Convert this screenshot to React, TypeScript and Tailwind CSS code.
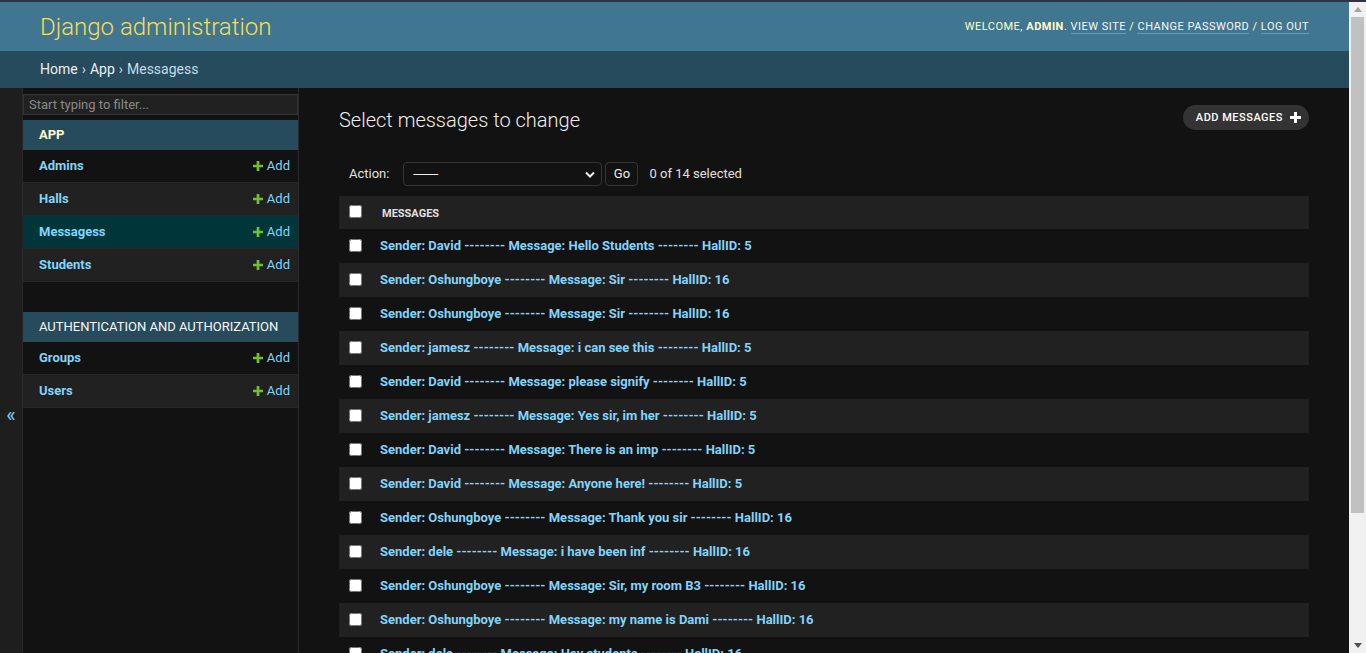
import React from "react";

const rows = [
  ["David", "Hello Students", "5"],
  ["Oshungboye", "Sir", "16"],
  ["Oshungboye", "Sir", "16"],
  ["jamesz", "i can see this", "5"],
  ["David", "please signify", "5"],
  ["jamesz", "Yes sir, im her", "5"],
  ["David", "There is an imp", "5"],
  ["David", "Anyone here!", "5"],
  ["Oshungboye", "Thank you sir", "16"],
  ["dele", "i have been inf", "16"],
  ["Oshungboye", "Sir, my room B3", "16"],
  ["Oshungboye", "my name is Dami", "16"],
  ["dele", "Hey students", "16"],
  ["David", "Good morning", "5"],
];

function Plus({ color, size = 11 }: { color: string; size?: number }) {
  return (
    <svg width={size} height={size} viewBox="0 0 11 11" className="shrink-0">
      <path d="M4 0h3v4h4v3H7v4H4V7H0V4h4z" fill={color} />
    </svg>
  );
}

function NavRow({ name, idx, current }: { name: string; idx: number; current?: boolean }) {
  const bg = current ? "bg-[#00363a]" : idx % 2 === 1 ? "bg-[#212121]" : "bg-[#121212]";
  return (
    <div className={`h-[33px] flex items-center justify-between pl-4 pr-2 border-b border-[#272727] ${bg}`}>
      <span className="text-[13px] font-bold text-[#81d4fa]">{name}</span>
      <span className="flex items-center gap-[4px] text-[13px] text-[#81d4fa]">
        <Plus color="#70bf2b" size={10} />
        Add
      </span>
    </div>
  );
}

export default function App() {
  return (
    <div className="w-[1366px] h-[653px] overflow-hidden flex flex-col bg-[#121212] font-[Roboto,'Noto_Sans',sans-serif] text-[#eeeeee]">
      <div className="h-[2px] shrink-0 bg-[#2e3442]" />
      <div className="flex flex-1 min-h-0">
        <div className="w-[1349px] flex flex-col overflow-hidden">
          {/* Header */}
          <div className="h-[49px] shrink-0 bg-[#417690] px-10 flex items-center justify-between">
            <div className="text-[24px] font-light text-[#f5dd5d] leading-none">Django administration</div>
            <div className="text-[11px] tracking-[0.5px] uppercase text-[#ffffcc] mt-[1px]">
              Welcome, <strong className="font-bold">admin</strong>.{" "}
              <span className="text-[#f7f7f7] border-b border-white/25">View site</span> /{" "}
              <span className="text-[#f7f7f7] border-b border-white/25">Change password</span> /{" "}
              <span className="text-[#f7f7f7] border-b border-white/25">Log out</span>
            </div>
          </div>
          {/* Breadcrumbs */}
          <div className="h-[37px] shrink-0 bg-[#264b5d] px-10 flex items-center text-[14px] text-[#c4dce8]">
            <span className="text-[#eeeeee]">Home</span>
            <span className="mx-[4px]">›</span>
            <span className="text-[#eeeeee]">App</span>
            <span className="mx-[4px]">›</span>
            <span>Messagess</span>
          </div>
          {/* Main */}
          <div className="flex flex-1 min-h-0">
            <div className="w-[23px] shrink-0 bg-[#1e1e1e] border-r border-[#272727] flex justify-center pt-[317px]">
              <span className="text-[20px] leading-none text-[#81d4fa]">«</span>
            </div>
            <div className="w-[276px] shrink-0 border-r border-[#2a2a2a] bg-[#121212]">
              <div className="mt-[6px] h-[21px] border border-[#353535] bg-[#212121] flex items-center px-[5px] text-[13px] text-[#8a8a8a]">
                Start typing to filter...
              </div>
              <div className="mt-[5px]">
                <div className="h-[30px] bg-[#264b5d] flex items-center pl-4 text-[13px] font-bold text-[#ffffcc] uppercase">App</div>
                <NavRow name="Admins" idx={0} />
                <NavRow name="Halls" idx={1} />
                <NavRow name="Messagess" idx={2} current />
                <NavRow name="Students" idx={3} />
              </div>
              <div className="mt-[30px]">
                <div className="h-[30px] bg-[#264b5d] flex items-center pl-4 text-[13px] text-[#f7f7f7] uppercase">
                  Authentication and Authorization
                </div>
                <NavRow name="Groups" idx={0} />
                <NavRow name="Users" idx={1} />
              </div>
            </div>
            <div className="flex-1 min-w-0 px-10 pt-5">
              <div className="flex items-start justify-between h-6">
                <h1 className="text-[20px] font-light leading-6 text-[#eeeeee]">Select messages to change</h1>
                <div className="-mt-[3px] h-[25px] rounded-[15px] bg-[#333333] flex items-center pl-[13px] pr-[8px] gap-[7px]">
                  <span className="text-[11px] font-medium tracking-[0.5px] uppercase text-white mt-[1px]">Add messages</span>
                  <Plus color="#ffffff" size={11} />
                </div>
              </div>
              <div className="mt-5 h-[44px] px-[10px] flex items-center text-[13px]">
                <span className="text-[#e0e0e0]">Action:</span>
                <div className="ml-[14px] w-[199px] h-6 border border-[#353535] rounded-[4px] bg-[#121212] flex items-center justify-between pl-[8px] pr-[6px]">
                  <span className="text-[13px] text-[#eeeeee] leading-none tracking-[-2px]">———</span>
                  <svg width="10" height="7" viewBox="0 0 10 7">
                    <path d="M1 1.5l4 4 4-4" stroke="#eeeeee" strokeWidth="2" fill="none" />
                  </svg>
                </div>
                <div className="ml-[3px] w-[33px] h-6 border border-[#353535] rounded-[4px] bg-[#121212] flex items-center justify-center text-[13px] text-[#eeeeee]">
                  Go
                </div>
                <span className="ml-[11px] text-[#e0e0e0]">0 of 14 selected</span>
              </div>
              <div className="w-full">
                <div className="h-[33px] bg-[#212121] flex items-center">
                  <div className="w-[33px] shrink-0 pl-[10px] flex items-center -mt-[2px]">
                    <input type="checkbox" className="w-[13px] h-[13px] m-0" readOnly />
                  </div>
                  <span className="pl-[10px] pt-[3px] text-[11px] font-bold uppercase text-[#e0e0e0]">Messages</span>
                </div>
                {rows.map((r, i) => (
                  <div key={i} className={`h-[34px] flex items-center ${i % 2 === 1 ? "bg-[#212121]" : "bg-[#121212]"}`}>
                    <div className="w-[33px] shrink-0 pl-[10px] flex items-center -mt-[2px]">
                      <input type="checkbox" className="w-[13px] h-[13px] m-0" readOnly />
                    </div>
                    <span className="pl-[8px] text-[13px] font-bold text-[#81d4fa] whitespace-nowrap">
                      Sender: {r[0]} -------- Message: {r[1]} -------- HallID: {r[2]}
                    </span>
                  </div>
                ))}
              </div>
            </div>
          </div>
        </div>
        {/* Scrollbar */}
        <div className="w-[17px] shrink-0 bg-[#f1f1f1] flex flex-col">
          <div className="h-[15px] flex items-center justify-center">
            <svg width="8" height="5" viewBox="0 0 8 5"><path d="M4 0l4 5H0z" fill="#a3a3a3" /></svg>
          </div>
          <div className="mx-[2px] h-[496px] bg-[#c1c1c1]" />
          <div className="flex-1" />
          <div className="h-[15px] flex items-center justify-center">
            <svg width="8" height="5" viewBox="0 0 8 5"><path d="M0 0h8L4 5z" fill="#505050" /></svg>
          </div>
        </div>
      </div>
    </div>
  );
}
